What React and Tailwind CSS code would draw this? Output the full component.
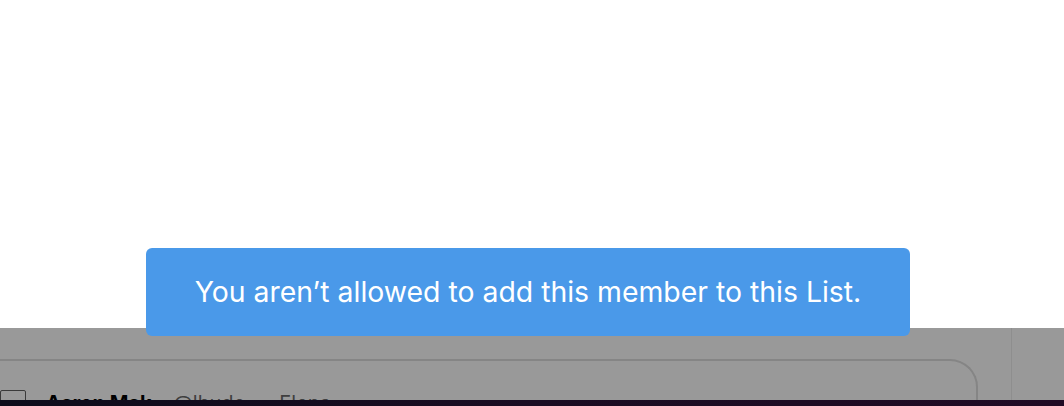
export default function App() {
  return (
    <div
      className="relative w-[1064px] h-[406px] overflow-hidden bg-white"
      style={{ fontFamily: "Inter, 'Liberation Sans', sans-serif" }}
    >
      <div className="h-[328px] bg-white" />
      <div className="flex h-[72px] bg-[#999999] overflow-hidden">
        <div className="w-[1012px] shrink-0 border-r border-[#8e8e8e] overflow-hidden">
          <div className="mt-[31px] ml-[-40px] w-[1018px] h-[80px] border-t-2 border-r-2 border-[#858585] rounded-tr-[28px]">
            <div className="flex items-start gap-5 pl-[40px] pt-[29px]">
              <div className="w-[26px] h-[20px] border border-[#3a3a3a] rounded-[2px]" />
              <div className="flex items-baseline text-[20px] leading-[24px] mt-[1px]">
                <span className="font-bold text-black">Aaron Mak</span>
                <span className="ml-[22px] text-[#3f3f3f]">@lhudo</span>
                <span className="ml-[14px] text-[#3f3f3f]">·</span>
                <span className="ml-[14px] text-[#3f3f3f]">Elena</span>
              </div>
            </div>
          </div>
        </div>
        <div className="flex-1" />
      </div>
      <div className="h-[6px] bg-gradient-to-r from-[#0d0c1b] via-[#1a0c22] to-[#200a24]" />

      <div className="absolute left-[146px] top-[248px] w-[764px] h-[88px] rounded-md bg-[#4a99e9] flex items-center justify-center">
        <p className="text-white text-[28.4px] leading-none">
          You aren’t allowed to add this member to this List.
        </p>
      </div>
    </div>
  );
}
